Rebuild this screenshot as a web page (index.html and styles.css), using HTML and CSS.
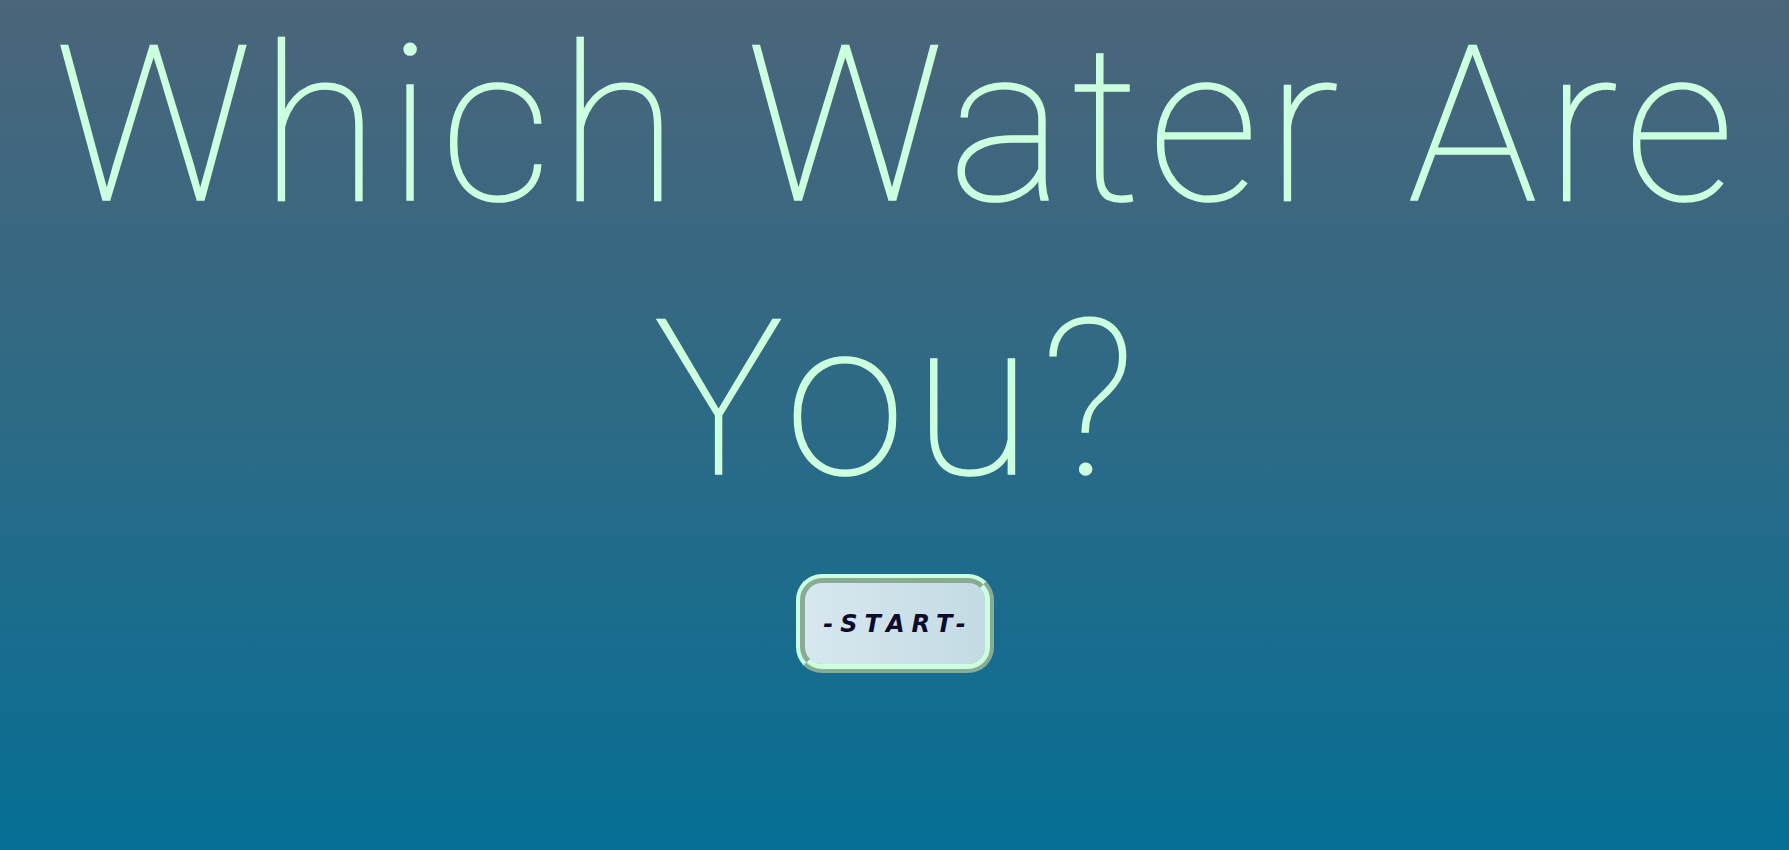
FILE: index.html
```html
<!DOCTYPE html>
<html lang="en">
<head>
<meta charset="utf-8">
<title>Which Water Are You?</title>
<link rel="stylesheet" href="styles.css">
</head>
<body>
<main class="intro">
  <h1 class="title">Which Water Are You?</h1>
  <button class="start-btn" type="button">-START-</button>
</main>
</body>
</html>
```

FILE: styles.css
```css
html, body {
  margin: 0;
  padding: 0;
}

body {
  min-height: 100vh;
  background: linear-gradient(to bottom, #4b657a 0%, #2c6a86 50%, #066f95 100%);
  font-family: "Roboto", "Liberation Sans", sans-serif;
}

.intro {
  display: flex;
  flex-direction: column;
  align-items: center;
}

.title {
  margin: -11px 0 0;
  padding-left: 8px;
  box-sizing: border-box;
  width: 100%;
  font-family: "Roboto", "Liberation Sans", sans-serif;
  font-weight: 100;
  font-size: 218px;
  line-height: 274px;
  letter-spacing: 8px;
  color: #ccffe0;
  -webkit-text-stroke: 1.6px #ccffe0;
  text-align: center;
}

.start-btn {
  margin-top: 37px;
  width: 198px;
  height: 99px;
  padding: 0 0 0 7px;
  border: 9px ridge #ccffe0;
  border-radius: 26px;
  background: linear-gradient(to right, #d7e7ef, #c4dbe4);
  font-family: "DejaVu Sans", "Liberation Sans", sans-serif;
  font-weight: bold;
  font-style: italic;
  font-size: 24px;
  letter-spacing: 7px;
  color: #0b0b2e;
  cursor: pointer;
}
```
